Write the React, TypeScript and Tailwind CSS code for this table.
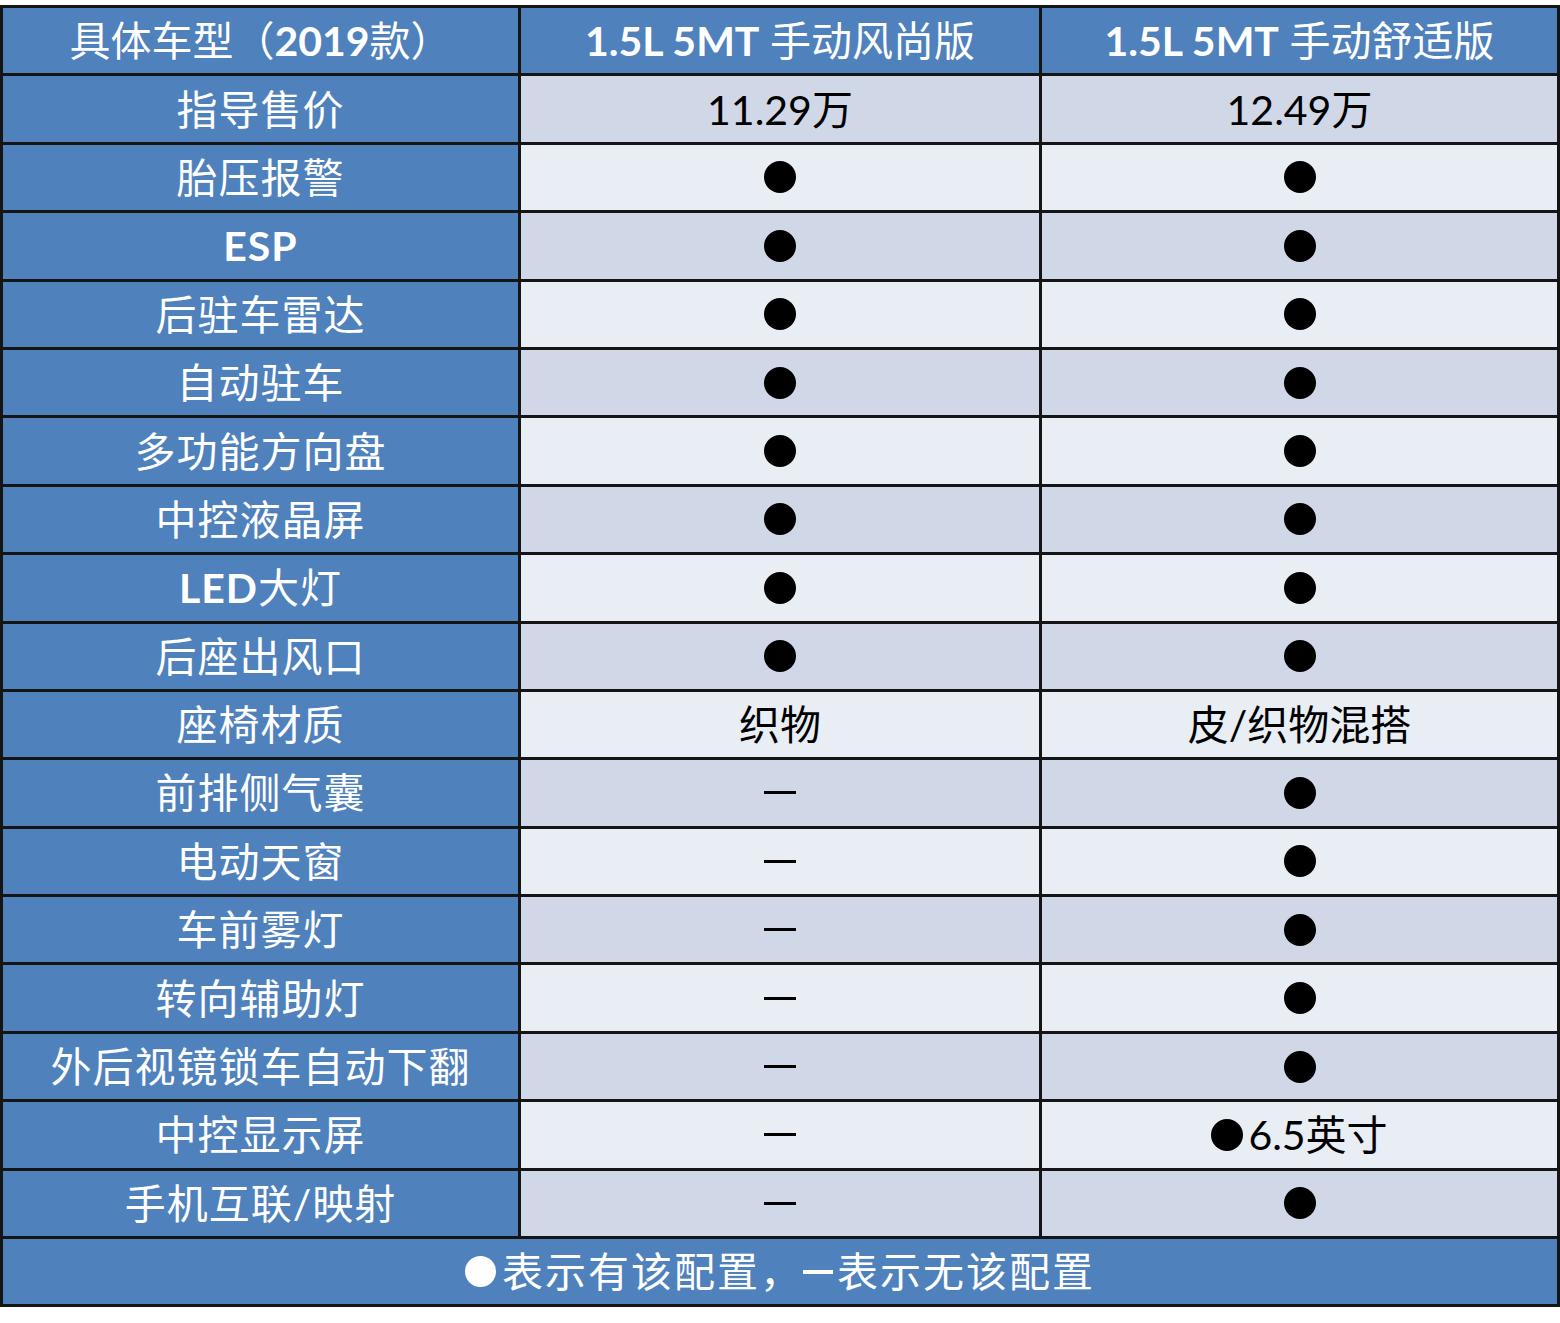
import React from "react";

type V = "dot" | "dash" | React.ReactNode;

const B = ({ children }: { children: React.ReactNode }) => (
  <span className="font-bold">{children}</span>
);

const Dot = ({ white }: { white?: boolean }) => (
  <span
    className={
      white
        ? "inline-block w-[31px] h-[31px] rounded-full bg-white"
        : "inline-block w-[32px] h-[32px] rounded-full bg-black"
    }
  />
);

const Dash = () => <span className="inline-block w-[32px] h-[3px] bg-black" />;

const rows: [React.ReactNode, V, V][] = [
  ["指导售价", "11.29万", "12.49万"],
  ["胎压报警", "dot", "dot"],
  [<B key="e">ESP</B>, "dot", "dot"],
  ["后驻车雷达", "dot", "dot"],
  ["自动驻车", "dot", "dot"],
  ["多功能方向盘", "dot", "dot"],
  ["中控液晶屏", "dot", "dot"],
  [
    <span key="l">
      <B>LED</B>大灯
    </span>,
    "dot",
    "dot",
  ],
  ["后座出风口", "dot", "dot"],
  ["座椅材质", "织物", "皮/织物混搭"],
  ["前排侧气囊", "dash", "dot"],
  ["电动天窗", "dash", "dot"],
  ["车前雾灯", "dash", "dot"],
  ["转向辅助灯", "dash", "dot"],
  ["外后视镜锁车自动下翻", "dash", "dot"],
  [
    "中控显示屏",
    "dash",
    <span key="s" className="flex items-center gap-[5px]">
      <Dot />
      <span>6.5英寸</span>
    </span>,
  ],
  ["手机互联/映射", "dash", "dot"],
];

const renderVal = (v: V) => {
  if (v === "dot") return <Dot />;
  if (v === "dash") return <Dash />;
  return v;
};

export default function App() {
  return (
    <div className="w-[1560px] min-h-[1323px] bg-white pt-[5px] font-[Lato,'Noto_Sans_CJK_SC',sans-serif] text-[41px] leading-none">
      <div className="grid grid-cols-[515px_518px_515px] auto-rows-[65.4px] gap-[3px] bg-[#151515] p-[3px]">
        <div className="flex items-center justify-center bg-[#4f81bd] text-white">
          具体车型（<B>2019</B>款）
        </div>
        <div className="flex items-center justify-center bg-[#4f81bd] text-white">
          <B>1.5L 5MT</B>&nbsp;手动风尚版
        </div>
        <div className="flex items-center justify-center bg-[#4f81bd] text-white">
          <B>1.5L 5MT</B>&nbsp;手动舒适版
        </div>
        {rows.map(([label, a, b], i) => {
          const bg = i % 2 === 0 ? "bg-[#d0d8e8]" : "bg-[#e9edf4]";
          return (
            <React.Fragment key={i}>
              <div className="flex items-center justify-center bg-[#4f81bd] text-white tracking-[1px]">
                {label}
              </div>
              <div className={`flex items-center justify-center text-black ${bg}`}>
                {renderVal(a)}
              </div>
              <div className={`flex items-center justify-center text-black ${bg}`}>
                {renderVal(b)}
              </div>
            </React.Fragment>
          );
        })}
        <div className="col-span-3 flex items-center justify-center bg-[#4f81bd] text-white">
          <span className="flex items-center tracking-[2px]">
            <Dot white />
            <span className="ml-[6px]">表示有该配置，</span>
            <span className="inline-block w-[30px] h-[4px] bg-white" />
            <span className="ml-[4px]">表示无该配置</span>
          </span>
        </div>
      </div>
    </div>
  );
}
